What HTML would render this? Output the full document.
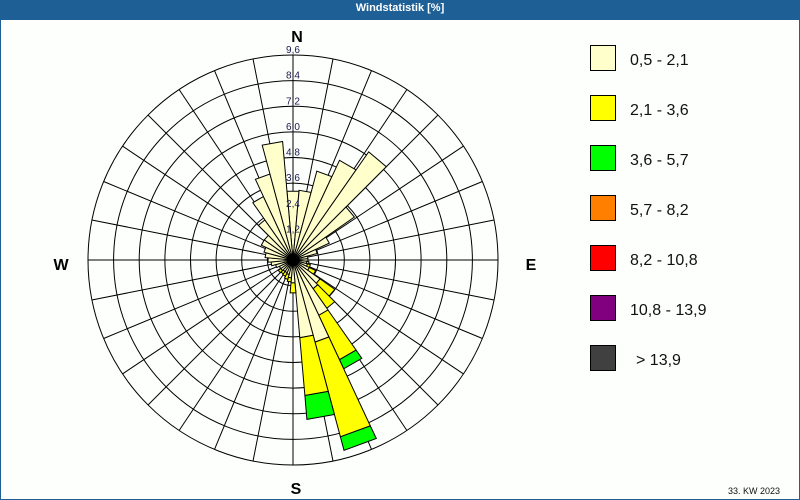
<!DOCTYPE html>
<html><head><meta charset="utf-8"><style>
html,body{margin:0;padding:0;width:800px;height:500px;overflow:hidden;background:#fff}
#wrap{position:absolute;left:0;top:0;width:798px;height:498px;border:1px solid #1e6096;background:#fcfffc}
#hdr{position:absolute;left:0;top:0;width:800px;height:20px;background:#1e6096;color:#fff;font:bold 11px "Liberation Sans",sans-serif;text-align:center;line-height:17px}
svg{position:absolute;left:0;top:0}
</style></head><body>
<div id="wrap"></div>
<div id="hdr">Windstatistik [%]</div>
<svg id="s" width="800" height="500" font-family="Liberation Sans, sans-serif"></svg>
<script>
var cx=293,cy=260,R=205;
var s='';
function pt(a,r){var t=a*Math.PI/180;return [cx+r*Math.sin(t),cy-r*Math.cos(t)];}
for(var i=1;i<=8;i++){s+='<circle cx="'+cx+'" cy="'+cy+'" r="'+(i*R/8).toFixed(1)+'" fill="none" stroke="#000" stroke-width="1"/>';}
for(var a=0;a<360;a+=11.25){var p=pt(a,R);s+='<line x1="'+cx+'" y1="'+cy+'" x2="'+p[0].toFixed(1)+'" y2="'+p[1].toFixed(1)+'" stroke="#000" stroke-width="1"/>';}
var bars=[[0,69],[10,70],[20,92],[30,110],[40,132],[50,75],[60,40],[70,25],[80,15],[90,15],[100,14,16],[110,15,18],[120,18,25],[130,33,51],[140,35,59],[150,61,110,120],[160,85,183,197],[170,78,136,160],[180,23,33],[190,18,22],[200,15,20],[210,14,18],[220,14,17],[230,15,18],[240,15],[250,18],[260,22],[270,25],[280,28],[290,30],[300,35],[310,35],[320,49],[330,70],[340,89],[350,119]];
var cols=['#ffffcc','#ffff00','#00ff00'];
function f(p){return p[0].toFixed(1)+' '+p[1].toFixed(1);}
function wedge(a,r0,r1,c){var a0=a-5,a1=a+5;
return '<path d="M'+f(pt(a0,r0))+'L'+f(pt(a0,r1))+'L'+f(pt(a1,r1))+'L'+f(pt(a1,r0))+'Z" fill="'+c+'" stroke="#000" stroke-width="1"/>';}
bars.forEach(function(b){var prev=0;for(var k=1;k<b.length;k++){s+=wedge(b[0],prev,b[k],cols[k-1]);prev=b[k];}});
s+='<circle cx="'+cx+'" cy="'+cy+'" r="6" fill="#000"/>';
var labs=['1,2','2,4','3,6','4,8','6,0','7,2','8,4','9,6'];
for(var i=0;i<8;i++){var r=(i+1)*R/8;s+='<text x="'+cx+'" y="'+(cy-r-2).toFixed(1)+'" font-size="10" text-anchor="middle" fill="#1a1a50">'+labs[i]+'</text>';}
s+='<text x="297" y="42" font-size="16" font-weight="bold" text-anchor="middle">N</text>';
s+='<text x="61" y="270" font-size="16" font-weight="bold" text-anchor="middle">W</text>';
s+='<text x="531" y="270" font-size="16" font-weight="bold" text-anchor="middle">E</text>';
s+='<text x="296" y="494" font-size="16" font-weight="bold" text-anchor="middle">S</text>';
var lc=['#ffffcc','#ffff00','#00ff00','#ff8000','#ff0000','#800080','#404040'];
var lt=['0,5 - 2,1','2,1 - 3,6','3,6 - 5,7','5,7 - 8,2','8,2 - 10,8','10,8 - 13,9','&gt; 13,9'];
for(var i=0;i<7;i++){var y=45+i*50;s+='<rect x="590.5" y="'+(y+0.5)+'" width="25" height="25" fill="'+lc[i]+'" stroke="#000" stroke-width="1"/>';
s+='<text x="'+(i==6?636:630)+'" y="'+(y+20)+'" font-size="16" fill="#111">'+lt[i]+'</text>';}
s+='<text x="728" y="494" font-size="9" fill="#111">33. KW 2023</text>';
document.getElementById('s').innerHTML=s;
</script>
</body></html>
